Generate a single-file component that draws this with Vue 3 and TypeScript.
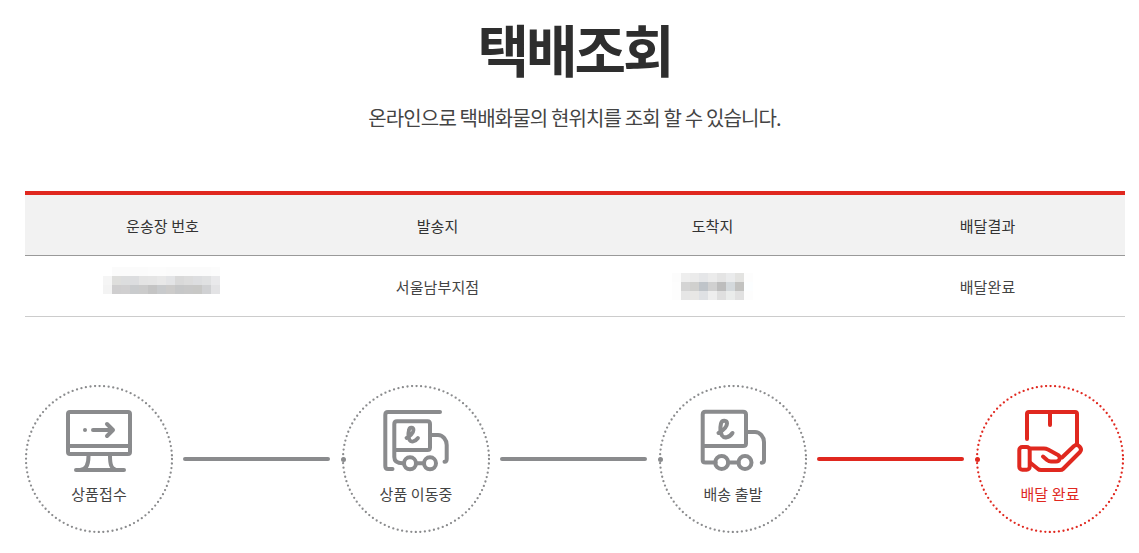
<script setup lang="ts">
const blurA: string[][] = [
  ['#ffffff','#fbfbfb','#fbfbfb','#fbfbfb','#fbfbfb','#fcfcfc','#fcfcfc','#fbfbfb','#fbfbfb','#fbfbfb','#fbfbfb','#fbfbfb','#fcfcfc'],
  ['#f5f5f5','#dededc','#dcddde','#dcdddf','#e4e4e4','#e5e5e5','#e8e8e8','#e3e4e6','#d9d9d9','#dcdcdc','#dddee0','#e0e1e2','#e9e9eb'],
  ['#f3f3f3','#cfcecf','#d0cfd0','#c9cbcd','#cbcbcb','#c4c4c4','#c8cacc','#cccbca','#c6c7c8','#c8c8c8','#c8c8c6','#d0d1d3','#e3e3e5'],
]
const blurB: string[][] = [
  ['#fcfcfc','#eeeeee','#ebebeb','#e5e6e8','#ebebeb','#e4e4e4','#eaebec','#e3e3e1','#fdfdfd'],
  ['#fdfdfd','#d4d4d4','#d0d0ce','#bfc4c9','#d0d0d0','#bdbdbd','#d4d9dc','#c2c2c0','#fcfeff'],
  ['#fdfdfd','#e6e6e6','#e8e7e5','#dfe1e4','#eeeeee','#dfdfdf','#eaeceb','#e1e1e1','#fdfdfd'],
]
</script>

<template>
  <main class="page">
    <h1 class="title">택배조회</h1>
    <p class="subtitle">온라인으로 택배화물의 현위치를 조회 할 수 있습니다.</p>

    <section class="table">
      <div class="row head">
        <div>운송장 번호</div>
        <div>발송지</div>
        <div>도착지</div>
        <div>배달결과</div>
      </div>
      <div class="row body">
        <div>
          <div class="blur blur-a">
            <template v-for="(r, i) in blurA" :key="i">
              <i v-for="(c, j) in r" :key="j" :style="{ background: c }"></i>
            </template>
          </div>
        </div>
        <div>서울남부지점</div>
        <div>
          <div class="blur blur-b">
            <template v-for="(r, i) in blurB" :key="i">
              <i v-for="(c, j) in r" :key="j" :style="{ background: c }"></i>
            </template>
          </div>
        </div>
        <div>배달완료</div>
      </div>
    </section>

    <section class="steps">
      <div class="step">
        <svg class="ring" width="148" height="148" viewBox="0 0 148 148"><circle cx="74" cy="74" r="73" /></svg>
        <svg class="icon" width="80" height="70" viewBox="0 0 80 70" fill="none" stroke-width="4" stroke-linecap="round" stroke-linejoin="round">
          <rect x="9" y="7" width="62" height="42" rx="2" />
          <path d="M9 41H71" />
          <path d="M29.500 51C29.500 59 28 65 21 65M51 51C51 59 52 65 59 65M17 65H65" />
          <path d="M34 25H54M48 19L54 25L48 31" />
          <circle class="fillc" cx="26" cy="25" r="2" />
        </svg>
        <span class="label">상품접수</span>
      </div>
      <div class="link"></div>
      <div class="step">
        <svg class="ring" width="148" height="148" viewBox="0 0 148 148"><circle cx="74" cy="74" r="73" /></svg>
        <i class="dot"></i>
        <svg class="icon" width="80" height="70" viewBox="0 0 80 70" fill="none" stroke-width="4" stroke-linecap="round" stroke-linejoin="round">
          <path d="M64 7H12Q9.300 7 9.300 10V61Q9.300 64 12 64H16.500" />
          <path d="M27 58.300Q18.300 58.300 18.300 52V19Q18.300 16.300 21 16.300H51.500Q54 16.300 54 19V42.500Q54 45 51.500 45H18.300" />
          <path d="M55 30H62C67 30 70.700 35 70.700 40V54Q70.700 56.700 68.500 56.700" />
          <circle cx="34" cy="58.300" r="6" />
          <circle cx="54" cy="58.300" r="6" />
          <path d="M40 58.300H48" />
          <path stroke-width="3.800" d="M30.500 33C33.500 31.500 37.500 28 37.500 25C37.500 22 33.500 21.500 33 25C32 29 32.500 33 33.500 35C35 37.500 39 37 42 33" />
        </svg>
        <span class="label">상품 이동중</span>
      </div>
      <div class="link"></div>
      <div class="step">
        <svg class="ring" width="148" height="148" viewBox="0 0 148 148"><circle cx="74" cy="74" r="73" /></svg>
        <i class="dot"></i>
        <svg class="icon" width="80" height="70" viewBox="0 0 80 70" fill="none" stroke-width="4" stroke-linecap="round" stroke-linejoin="round">
          <path d="M22.700 57.500H12.500Q9.700 57.500 9.700 55V9.500Q9.700 6.700 12.500 6.700H50Q53 6.700 53 9.500V38.500Q53 41 50 41H9.700" />
          <path d="M54 27H62C67 27 71 32 71 37V55Q71 57.700 68.700 57.700" />
          <circle cx="28.700" cy="57.500" r="6.500" />
          <circle cx="52" cy="57.500" r="6.500" />
          <path d="M35.200 57.500H45.500" />
          <path stroke-width="4" d="M25.500 28C29 26 34 22 34 18.500C34 15 29 14.500 28 18.500C27 23 27.500 28 29 30.500C31 33.500 36 33 39.500 28" />
        </svg>
        <span class="label">배송 출발</span>
      </div>
      <div class="link active"></div>
      <div class="step active">
        <svg class="ring" width="148" height="148" viewBox="0 0 148 148"><circle cx="74" cy="74" r="73" /></svg>
        <i class="dot"></i>
        <svg class="icon" width="80" height="70" viewBox="0 0 80 70" fill="none" stroke-width="4" stroke-linecap="round" stroke-linejoin="round">
          <path d="M17 34V9Q17 7 19 7H65Q67 7 67 9V40" />
          <path d="M40 7V20" />
          <rect x="9.300" y="42" width="10.400" height="22.700" rx="3" />
          <path d="M20 43.500H34Q36 43.500 38 44.500L48 50C51 52 50 56.500 46 56.500H41Q39 56.500 37 55L33 51.500" />
          <path d="M20 57.500L28 64Q29 65 31 65H50Q52 65 53 64L70 47C73 43.500 68 38 64 41L52 52.500" />
        </svg>
        <span class="label">배달 완료</span>
      </div>
    </section>
  </main>
</template>

<style scoped>
.page {
  width: 1099px;
  margin-left: 25px;
  font-family: "Noto Sans CJK KR", "Noto Sans", sans-serif;
  color: #333;
}
.title {
  margin: 0;
  padding-top: 8px;
  height: 78px;
  line-height: 80px;
  font-size: 56px;
  font-weight: 700;
  letter-spacing: -3px;
  text-align: center;
  color: #2e2e2e;
}
.subtitle {
  margin: 0;
  padding-top: 17px;
  height: 90px;
  box-sizing: border-box;
  line-height: 30px;
  font-size: 20px;
  letter-spacing: -0.85px;
  text-align: center;
  color: #444;
}
.table {
  width: 1100px;
  margin-top: 15px;
  border-top: 4px solid #e0281f;
  font-size: 15px;
  letter-spacing: 0.1px;
  color: #444;
}
.row {
  display: grid;
  grid-template-columns: repeat(4, 275px);
  text-align: center;
  align-items: center;
}
.head {
  height: 60px;
  background: #f2f2f2;
  border-bottom: 1px solid #999;
  color: #333;
}
.body {
  height: 60px;
  border-bottom: 1px solid #ccc;
}
.blur {
  display: grid;
  grid-auto-rows: 9px;
  margin: 0 auto;
}
.blur i { display: block; }
.blur-a {
  width: 117px;
  grid-template-columns: repeat(13, 9px);
  margin-bottom: 12px;
  transform: translateX(-1px);
}
.blur-b {
  width: 81px;
  grid-template-columns: repeat(9, 9px);
}
.steps {
  display: flex;
  margin-top: 68px;
  align-items: center;
}
.step {
  --c: #8a8b8d;
  position: relative;
  flex: 0 0 148px;
  height: 148px;
  box-sizing: border-box;
  padding-top: 20px;
  display: flex;
  flex-direction: column;
  align-items: center;
}
.step.active { --c: #e0281f; }
.ring {
  position: absolute;
  left: 0;
  top: 0;
  fill: none;
  stroke: var(--c);
  stroke-width: 2.300;
  stroke-linecap: round;
  stroke-dasharray: 0 4.587;
}
.icon { display: block; stroke: var(--c); }
.fillc { fill: var(--c); stroke: none; }
.label {
  margin-top: 9px;
  font-size: 15px;
  letter-spacing: 0.1px;
  line-height: 20px;
  color: #444;
}
.step.active .label { color: #e0281f; }
.dot {
  position: absolute;
  left: -1px;
  top: 72px;
  width: 5px;
  height: 5px;
  border-radius: 50%;
  background: var(--c);
}
.link {
  flex: 1;
  height: 4px;
  margin: 0 12px 0 10px;
  border-radius: 2px;
  background: #8a8b8d;
}
.link.active { background: #e0281f; }
</style>
